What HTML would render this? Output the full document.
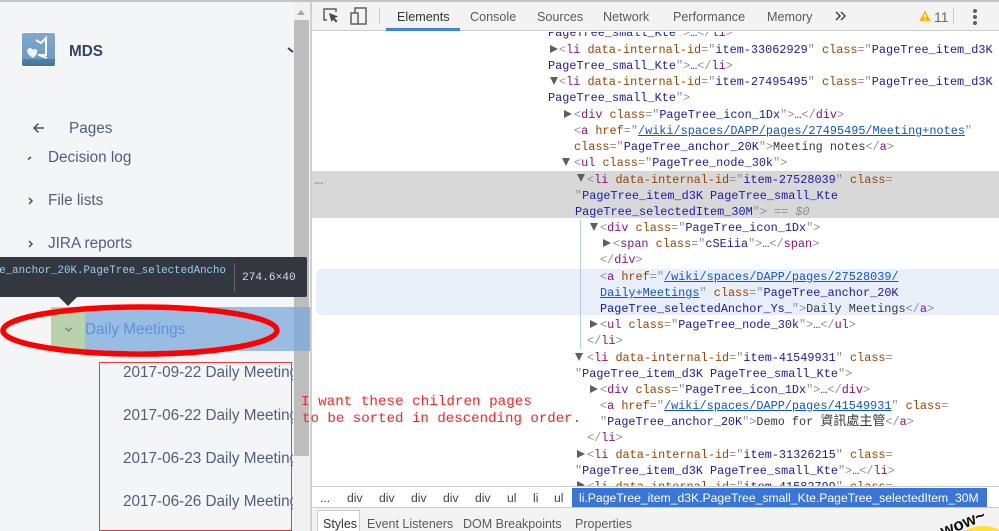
<!DOCTYPE html>
<html style="overflow:hidden"><head><meta charset="utf-8">
<style>
html,body{margin:0;padding:0;width:999px;height:531px;overflow:hidden}
body{background:#fff;font-family:"Liberation Sans","Noto Sans CJK TC",sans-serif}
div{position:absolute}
#w{left:0;top:0;width:999px;height:531px;overflow:hidden;background:#fff}
.s{color:#505f79;font-size:15.3px;line-height:20px;white-space:nowrap}
.tab{font-size:12.6px;color:#5a5a5a;top:9px;line-height:16px;white-space:nowrap}
#code{left:312px;top:32px;width:687px;height:454px;overflow:hidden;background:#fff}
.l{white-space:pre;font-family:"Liberation Mono","Noto Sans CJK TC",monospace;font-size:11.85px;line-height:16px;height:16px;color:#303942}
.t{color:#881280}.a{color:#994500}.v{color:#1a1aa6}.g{color:#8f8f8f}.u{color:#1155cc;text-decoration:underline}
.ar{width:0;height:0;border-style:solid}
.r{border-width:4.5px 0 4.5px 8px;border-color:transparent transparent transparent #5f5f5f}
.d{border-width:8px 4.5px 0 4.5px;border-color:#5f5f5f transparent transparent transparent}
.bc{top:490px;font-size:12.2px;color:#444;line-height:16px}
.bt{top:516px;font-size:12.5px;color:#5a5a5a;line-height:16px;white-space:nowrap}
.n{font-family:"Liberation Mono",monospace;font-size:14.1px;line-height:17px;color:#f22;white-space:pre}
</style></head><body><div id="w">
<div style="left:0;top:0;width:310px;height:531px;background:#f4f5f7"></div>
<div style="left:0;top:0;width:999px;height:2px;background:#c4c4c4"></div>

<!-- logo -->
<div style="left:21px;top:32px;width:35px;height:35px;background:#fff;border-radius:3px"></div>
<div style="left:22px;top:33px;width:33px;height:33px;background:linear-gradient(#7fa9cd,#6f9bc1 78%,#4f83ad 79%,#41719a);border-radius:2px"></div>
<svg style="position:absolute;left:22px;top:33px" width="33" height="33" viewBox="0 0 33 33"><path d="M14 7l5 3 5-5v17H16" fill="none" stroke="#fff" stroke-width="2"/><path d="M5 17c2-3 5-2 6 0 2-2 5-1 4 3-1 3-3 4-4 5-3-2-6-4-6-8z" fill="#eef3f8"/><path d="M17 22l8 3" stroke="#fff" stroke-width="2"/></svg>
<div style="left:69px;top:42px;font-size:15.3px;line-height:20px;font-weight:700;color:#344563">MDS</div>
<svg style="position:absolute;left:287px;top:46px" width="8" height="8"><path d="M1 2l5 4" stroke="#2f4266" stroke-width="2"/></svg>

<div class="s" style="left:48px;top:148px">Decision log</div>
<svg style="position:absolute;left:26px;top:154px" width="8" height="8"><path d="M2 5.5L5 3" fill="none" stroke="#42526e" stroke-width="1.5"/></svg>
<div class="s" style="left:48px;top:191px">File lists</div>
<div class="s" style="left:48px;top:234px">JIRA reports</div>
<svg style="position:absolute;left:28px;top:197px" width="6" height="8"><path d="M1 1l3 3-3 3" fill="none" stroke="#42526e" stroke-width="1.5"/></svg>
<svg style="position:absolute;left:28px;top:240px" width="6" height="8"><path d="M1 1l3 3-3 3" fill="none" stroke="#42526e" stroke-width="1.5"/></svg>
<div style="left:0;top:110px;width:294px;height:41px;background:#f4f5f7"></div>
<svg style="position:absolute;left:32px;top:121px" width="14" height="14" viewBox="0 0 14 14"><path d="M12 7H2M6.5 2.5L2 7l4.5 4.5" fill="none" stroke="#42526e" stroke-width="1.5"/></svg>
<div class="s" style="left:69px;top:119px">Pages</div>

<!-- highlighted row -->
<div style="left:51px;top:307px;width:34px;height:44px;background:#b9d2ac"></div>
<div style="left:85px;top:307px;width:225px;height:44px;background:#98bce2"></div>
<svg style="position:absolute;left:64px;top:326px" width="10" height="8"><path d="M1.5 2L4.5 5 7.500 2" fill="none" stroke="#5d8f9e" stroke-width="1.5"/></svg>
<div class="s" style="left:85px;top:320px;color:#5b93de">Daily Meetings</div>

<!-- scrollbar -->
<div style="left:294px;top:2px;width:15px;height:529px;background:#f1f1f1"></div>
<div style="left:294px;top:20px;width:15px;height:436px;background:#bdbdbd"></div>
<div class="ar" style="left:297px;top:10px;border-width:0 4.5px 5px 4.5px;border-color:transparent transparent #a3a3a3 transparent"></div>
<div style="left:294px;top:307px;width:16px;height:44px;background:#8bafd4"></div>

<!-- child items -->
<div style="left:100px;top:362px;width:193px;height:169px;overflow:hidden">
<div class="s" style="left:23px;top:1px">2017-09-22 Daily Meetings</div>
<div class="s" style="left:23px;top:44px">2017-06-22 Daily Meetings</div>
<div class="s" style="left:23px;top:87px">2017-06-23 Daily Meetings</div>
<div class="s" style="left:23px;top:130px">2017-06-26 Daily Meetings</div>
</div>
<div style="left:99px;top:362px;width:191px;height:167px;border:1px solid #f03a3a"></div>

<!-- tooltip -->
<div style="left:0;top:257px;width:307px;height:40px;background:#333740;border-radius:0 2px 2px 0"></div>
<div class="ar" style="left:59px;top:297px;border-width:9px 9px 0 9px;border-color:#333740 transparent transparent transparent"></div>
<div style="left:0;top:263px;width:226px;height:16px;overflow:hidden"><div class="l" style="right:0;top:0;color:#93d4f0;font-size:10.8px">e_anchor_20K.PageTree_selectedAncho</div></div>
<div style="left:234px;top:263px;width:1px;height:29px;background:#666"></div>
<div class="l" style="left:242px;top:270px;color:#dcdcdc;font-size:11.2px">274.6×40</div>

<!-- ellipse -->
<svg style="position:absolute;left:0;top:300px" width="285" height="60"><ellipse cx="140" cy="30.5" rx="137" ry="23.5" fill="none" stroke="#f00" stroke-width="5.5"/></svg>

<!-- devtools -->
<div style="left:310px;top:2px;width:2px;height:529px;background:#cfcfcf"></div>
<div style="left:312px;top:2px;width:687px;height:28px;background:#f3f3f3;border-bottom:1px solid #ccc"></div>
<svg style="position:absolute;left:322px;top:7px" width="18" height="18"><path d="M5 13H2V2h12v3" fill="none" stroke="#5f5f5f" stroke-width="1.5"/><path d="M7 6l9 3.5-3.5 1.500 3 3-1.500 1.500-3-3L9.500 15z" fill="#4a4a4a"/></svg>
<svg style="position:absolute;left:350px;top:6px" width="18" height="20"><rect x="1" y="7" width="7" height="11" fill="none" stroke="#5f5f5f" stroke-width="1.5"/><path d="M5 7V2h11v16H8" fill="none" stroke="#5f5f5f" stroke-width="1.5"/></svg>
<div style="left:379px;top:8px;width:1px;height:16px;background:#ccc"></div>
<div class="tab" style="left:397px;color:#333">Elements</div>
<div style="left:386px;top:28px;width:74px;height:3px;background:#3b82e8"></div>
<div class="tab" style="left:470px">Console</div>
<div class="tab" style="left:537px">Sources</div>
<div class="tab" style="left:603px">Network</div>
<div class="tab" style="left:673px">Performance</div>
<div class="tab" style="left:767px">Memory</div>
<svg style="position:absolute;left:835px;top:11px" width="11" height="10"><path d="M1 1l4 4-4 4M6 1l4 4-4 4" fill="none" stroke="#444" stroke-width="1.5"/></svg>
<svg style="position:absolute;left:919px;top:10px" width="12" height="12"><path d="M6 .5L11.500 11H.5z" fill="#f4b400"/><rect x="5.300" y="4" width="1.500" height="4" fill="#fff"/><rect x="5.300" y="9" width="1.500" height="1.300" fill="#fff"/></svg>
<div class="tab" style="left:934px;color:#666;font-size:14px">11</div>
<div style="left:953px;top:8px;width:1px;height:16px;background:#ccc"></div>
<div style="left:973px;top:9px;width:4px;height:4px;border-radius:2px;background:#5f5f5f"></div>
<div style="left:973px;top:15px;width:4px;height:4px;border-radius:2px;background:#5f5f5f"></div>
<div style="left:973px;top:21px;width:4px;height:4px;border-radius:2px;background:#5f5f5f"></div>

<div id="code">
<div style="left:0;top:139px;width:687px;height:47px;background:#d8d8d8"></div>
<div style="left:4px;top:237px;width:683px;height:46px;background:#e9eff9;border-radius:6px 0 0 6px"></div>
<div style="left:268px;top:187px;width:1px;height:130px;background:#b5cbe8"></div>
<div class="g" style="left:2px;top:142px;font-size:11px;line-height:14px;font-weight:700">...</div>

<div class="l" style="left:236px;top:-7px"><span class="v">PageTree_small_Kte</span> <span class="g">&gt;</span>…<span class="g">&lt;/</span><span class="t">li</span><span class="g">&gt;</span></div>

<div class="ar r" style="left:238px;top:13px"></div>
<div class="l" style="left:247px;top:10px"><span class="g">&lt;</span><span class="t">li</span> <span class="a">data-internal-id</span><span class="g">="</span><span class="v">item-33062929</span><span class="g">"</span> <span class="a">class</span><span class="g">="</span><span class="v">PageTree_item_d3K</span></div>
<div class="l" style="left:236px;top:26px"><span class="v">PageTree_small_Kte</span><span class="g">"&gt;</span>…<span class="g">&lt;/</span><span class="t">li</span><span class="g">&gt;</span></div>

<div class="ar d" style="left:238px;top:45px"></div>
<div class="l" style="left:247px;top:42px"><span class="g">&lt;</span><span class="t">li</span> <span class="a">data-internal-id</span><span class="g">="</span><span class="v">item-27495495</span><span class="g">"</span> <span class="a">class</span><span class="g">="</span><span class="v">PageTree_item_d3K</span></div>
<div class="l" style="left:236px;top:58px"><span class="v">PageTree_small_Kte</span><span class="g">"&gt;</span></div>

<div class="ar r" style="left:252px;top:78px"></div>
<div class="l" style="left:262px;top:75px"><span class="g">&lt;</span><span class="t">div</span> <span class="a">class</span><span class="g">="</span><span class="v">PageTree_icon_1Dx</span><span class="g">"&gt;</span>…<span class="g">&lt;/</span><span class="t">div</span><span class="g">&gt;</span></div>
<div class="l" style="left:262px;top:91px"><span class="g">&lt;</span><span class="t">a</span> <span class="a">href</span><span class="g">="</span><span class="u">/wiki/spaces/DAPP/pages/27495495/Meeting+notes</span><span class="g">"</span></div>
<div class="l" style="left:262px;top:107px"><span class="a">class</span><span class="g">="</span><span class="v">PageTree_anchor_20K</span><span class="g">"&gt;</span>Meeting notes<span class="g">&lt;/</span><span class="t">a</span><span class="g">&gt;</span></div>
<div class="ar d" style="left:250px;top:126px"></div>
<div class="l" style="left:262px;top:123px"><span class="g">&lt;</span><span class="t">ul</span> <span class="a">class</span><span class="g">="</span><span class="v">PageTree_node_30k</span><span class="g">"&gt;</span></div>

<div class="ar d" style="left:265px;top:142px"></div>
<div class="l" style="left:275px;top:140px"><span class="g">&lt;</span><span class="t">li</span> <span class="a">data-internal-id</span><span class="g">="</span><span class="v">item-27528039</span><span class="g">"</span> <span class="a">class</span><span class="g">=</span></div>
<div class="l" style="left:263px;top:156px"><span class="g">"</span><span class="v">PageTree_item_d3K PageTree_small_Kte</span></div>
<div class="l" style="left:263px;top:172px"><span class="v">PageTree_selectedItem_30M</span><span class="g">"&gt; <i>== $0</i></span></div>

<div class="ar d" style="left:278px;top:191px"></div>
<div class="l" style="left:288px;top:188px"><span class="g">&lt;</span><span class="t">div</span> <span class="a">class</span><span class="g">="</span><span class="v">PageTree_icon_1Dx</span><span class="g">"&gt;</span></div>
<div class="ar r" style="left:291px;top:207px"></div>
<div class="l" style="left:301px;top:204px"><span class="g">&lt;</span><span class="t">span</span> <span class="a">class</span><span class="g">="</span><span class="v">cSEiia</span><span class="g">"&gt;</span>…<span class="g">&lt;/</span><span class="t">span</span><span class="g">&gt;</span></div>
<div class="l" style="left:288px;top:220px"><span class="g">&lt;/</span><span class="t">div</span><span class="g">&gt;</span></div>
<div class="l" style="left:288px;top:237px"><span class="g">&lt;</span><span class="t">a</span> <span class="a">href</span><span class="g">="</span><span class="u">/wiki/spaces/DAPP/pages/27528039/</span></div>
<div class="l" style="left:288px;top:253px"><span class="u">Daily+Meetings</span><span class="g">"</span> <span class="a">class</span><span class="g">="</span><span class="v">PageTree_anchor_20K</span></div>
<div class="l" style="left:288px;top:269px"><span class="v">PageTree_selectedAnchor_Ys_</span><span class="g">"&gt;</span>Daily Meetings<span class="g">&lt;/</span><span class="t">a</span><span class="g">&gt;</span></div>
<div class="ar r" style="left:278px;top:288px"></div>
<div class="l" style="left:288px;top:285px"><span class="g">&lt;</span><span class="t">ul</span> <span class="a">class</span><span class="g">="</span><span class="v">PageTree_node_30k</span><span class="g">"&gt;</span>…<span class="g">&lt;/</span><span class="t">ul</span><span class="g">&gt;</span></div>
<div class="l" style="left:275px;top:301px"><span class="g">&lt;/</span><span class="t">li</span><span class="g">&gt;</span></div>

<div class="ar d" style="left:263px;top:321px"></div>
<div class="l" style="left:275px;top:318px"><span class="g">&lt;</span><span class="t">li</span> <span class="a">data-internal-id</span><span class="g">="</span><span class="v">item-41549931</span><span class="g">"</span> <span class="a">class</span><span class="g">=</span></div>
<div class="l" style="left:263px;top:334px"><span class="g">"</span><span class="v">PageTree_item_d3K PageTree_small_Kte</span><span class="g">"&gt;</span></div>
<div class="ar r" style="left:278px;top:353px"></div>
<div class="l" style="left:288px;top:350px"><span class="g">&lt;</span><span class="t">div</span> <span class="a">class</span><span class="g">="</span><span class="v">PageTree_icon_1Dx</span><span class="g">"&gt;</span>…<span class="g">&lt;/</span><span class="t">div</span><span class="g">&gt;</span></div>
<div class="l" style="left:288px;top:366px"><span class="g">&lt;</span><span class="t">a</span> <span class="a">href</span><span class="g">="</span><span class="u">/wiki/spaces/DAPP/pages/41549931</span><span class="g">"</span> <span class="a">class</span><span class="g">=</span></div>
<div class="l" style="left:288px;top:382px"><span class="g">"</span><span class="v">PageTree_anchor_20K</span><span class="g">"&gt;</span>Demo for <span style="font-size:13px">資訊處主管</span><span class="g">&lt;/</span><span class="t">a</span><span class="g">&gt;</span></div>
<div class="l" style="left:275px;top:398px"><span class="g">&lt;/</span><span class="t">li</span><span class="g">&gt;</span></div>

<div class="ar r" style="left:265px;top:418px"></div>
<div class="l" style="left:275px;top:415px"><span class="g">&lt;</span><span class="t">li</span> <span class="a">data-internal-id</span><span class="g">="</span><span class="v">item-31326215</span><span class="g">"</span> <span class="a">class</span><span class="g">=</span></div>
<div class="l" style="left:263px;top:431px"><span class="g">"</span><span class="v">PageTree_item_d3K PageTree_small_Kte</span><span class="g">"&gt;</span>…<span class="g">&lt;/</span><span class="t">li</span><span class="g">&gt;</span></div>
<div class="ar r" style="left:265px;top:449px"></div>
<div class="l" style="left:275px;top:447px"><span class="g">&lt;</span><span class="t">li</span> <span class="a">data-internal-id</span><span class="g">="</span><span class="v">item-41582799</span><span class="g">"</span> <span class="a">class</span><span class="g">=</span></div>
</div>

<!-- annotation -->
<div class="n" style="left:301px;top:394px;font-size:14.25px">I want these children pages</div>
<div class="n" style="left:302px;top:411px">to be sorted in descending order.</div>

<!-- breadcrumb -->
<div style="left:312px;top:486px;width:687px;height:21px;background:#fff;border-top:1px solid #ccc;box-sizing:border-box"></div>
<div class="bc" style="left:320px">...</div>
<div class="bc" style="left:347px">div</div>
<div class="bc" style="left:379px">div</div>
<div class="bc" style="left:411px">div</div>
<div class="bc" style="left:443px">div</div>
<div class="bc" style="left:475px">div</div>
<div class="bc" style="left:507px">ul</div>
<div class="bc" style="left:533px">li</div>
<div class="bc" style="left:554px">ul</div>
<div style="left:572px;top:488px;width:415px;height:19px;background:#3a75d8"></div>
<div class="bc" style="left:579px;color:#fff;white-space:nowrap">li.PageTree_item_d3K.PageTree_small_Kte.PageTree_selectedItem_30M</div>

<!-- bottom tabs -->
<div style="left:312px;top:507px;width:687px;height:24px;background:#f3f3f3;border-top:1px solid #ccc;box-sizing:border-box"></div>
<div style="left:317px;top:510px;width:43px;height:21px;background:#fff;border:1px solid #ccc;border-bottom:none;box-sizing:border-box"></div>
<div class="bt" style="left:323px;color:#333">Styles</div>
<div class="bt" style="left:367px">Event Listeners</div>
<div class="bt" style="left:463px">DOM Breakpoints</div>
<div class="bt" style="left:575px">Properties</div>

<!-- sticker -->
<div style="left:958px;top:526px;width:50px;height:30px;border-radius:50%;background:#ffe13a"></div>
<div style="left:938px;top:524px;font-size:17px;line-height:18px;font-weight:700;color:#111;transform:rotate(-22deg);transform-origin:left top;white-space:nowrap">wow~</div>
</div></body></html>
